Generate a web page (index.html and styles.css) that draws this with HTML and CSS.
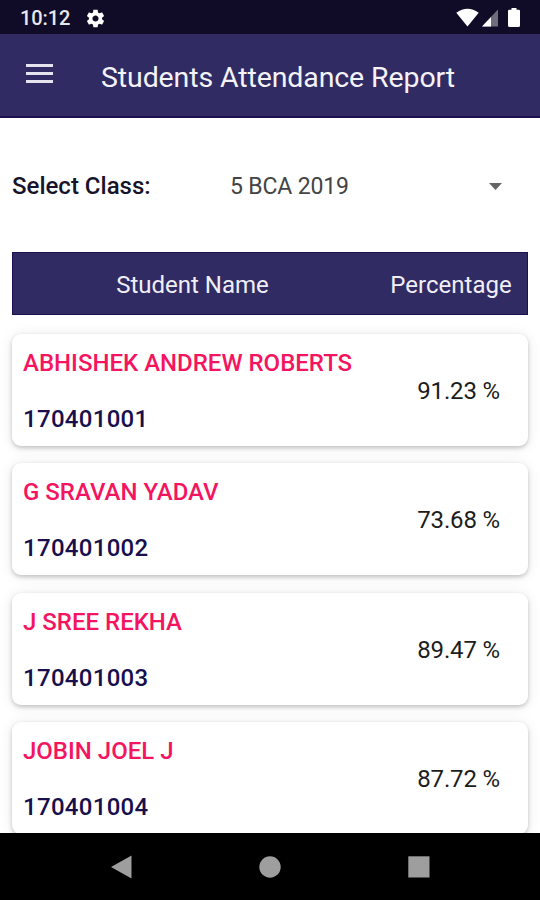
FILE: index.html
```
<!DOCTYPE html>
<html lang="en">
<head>
<meta charset="utf-8">
<title>Students Attendance Report</title>
<link rel="stylesheet" href="styles.css">
</head>
<body>
<div class="status">
  <span class="time">10:12</span>
  <svg class="gear" viewBox="0 0 24 24"><path fill="#fff" d="M19.43 12.98c.04-.32.07-.64.07-.98s-.03-.66-.07-.98l2.11-1.65c.19-.15.24-.42.12-.64l-2-3.46c-.12-.22-.39-.3-.61-.22l-2.49 1c-.52-.4-1.08-.73-1.69-.98l-.38-2.65C14.46 2.18 14.25 2 14 2h-4c-.25 0-.46.18-.49.42l-.38 2.65c-.61.25-1.17.59-1.69.98l-2.49-1c-.23-.09-.49 0-.61.22l-2 3.46c-.13.22-.07.49.12.64l2.11 1.65c-.04.32-.07.65-.07.98s.03.66.07.98l-2.11 1.65c-.19.15-.24.42-.12.64l2 3.46c.12.22.39.3.61.22l2.49-1c.52.4 1.08.73 1.69.98l.38 2.65c.03.24.24.42.49.42h4c.25 0 .46-.18.49-.42l.38-2.65c.61-.25 1.17-.59 1.69-.98l2.49 1c.23.09.49 0 .61-.22l2-3.46c.12-.22.07-.49-.12-.64l-2.11-1.65zM12 15.5c-1.93 0-3.500-1.570-3.500-3.500s1.570-3.500 3.500-3.500 3.500 1.570 3.500 3.500-1.570 3.500-3.500 3.500z"/></svg>
  <svg class="signals" viewBox="0 0 66 20"><path fill="#fff" d="M.3 4.800Q11.500-3.200 22.700 4.800L11.500 18.500Z"/><path fill="#6f6d7c" d="M42 1.500V18.500H26Z"/><path fill="#fff" d="M35 9V18.500H26Z"/><path fill="#fff" d="M55.500 0h5v1.800h2.200q1.300 0 1.300 1.300v14.400q0 1.500-1.500 1.500h-9q-1.500 0-1.500-1.500V3.100q0-1.300 1.300-1.300h2.200z"/></svg>
</div>
<header class="appbar">
  <div class="menu"><i></i><i></i><i></i></div>
  <h1>Students Attendance Report</h1>
</header>
<main>
  <div class="picker">
    <span class="label">Select Class:</span>
    <span class="value">5 BCA 2019</span>
    <svg class="caret" viewBox="0 0 13 7"><path fill="#666" d="M0 0h13L6.500 7z"/></svg>
  </div>
  <div class="thead"><span class="col-name">Student Name</span><span class="col-pct">Percentage</span></div>
  <div class="list">
    <div class="card"><div class="who"><span class="name">ABHISHEK ANDREW ROBERTS</span><span class="roll">170401001</span></div><span class="pct">91.23 %</span></div>
    <div class="card"><div class="who"><span class="name">G SRAVAN YADAV</span><span class="roll">170401002</span></div><span class="pct">73.68 %</span></div>
    <div class="card"><div class="who"><span class="name">J SREE REKHA</span><span class="roll">170401003</span></div><span class="pct">89.47 %</span></div>
    <div class="card"><div class="who"><span class="name">JOBIN JOEL J</span><span class="roll">170401004</span></div><span class="pct">87.72 %</span></div>
  </div>
</main>
<nav class="navbar">
  <svg viewBox="0 0 24 24"><path fill="#9e9e9e" d="M22.500.5v23L2 12z"/></svg>
  <svg viewBox="0 0 24 24"><circle fill="#9e9e9e" cx="12" cy="12" r="10.700"/></svg>
  <svg viewBox="0 0 24 24"><path fill="#9e9e9e" d="M1.300 1.300h21.200v21.200H1.300z"/></svg>
</nav>
</body>
</html>
```
FILE: styles.css
```
* { box-sizing: border-box; }
body {
  margin: 0;
  height: 900px;
  display: flex;
  flex-direction: column;
  overflow: hidden;
  background: #fff;
  font-family: Roboto, sans-serif;
  white-space: nowrap;
}
.status {
  height: 34px;
  flex: none;
  display: flex;
  align-items: center;
  padding: 2px 18px 0 20px;
  background: #100c28;
  color: #e8e8ec;
}
.time { width: 65px; font-size: 20px; font-weight: 500; line-height: 24px; letter-spacing: -.1px; }
.gear { width: 21px; height: 21px; }
.signals { width: 66px; height: 20px; margin-left: auto; }
.appbar {
  height: 84px;
  flex: none;
  display: flex;
  align-items: center;
  padding: 0 26px;
  background: #312b63;
  border-bottom: 2px solid #1c1150;
}
.menu { width: 27px; margin: -4px 48px 0 0; display: grid; gap: 5px; }
.menu i { height: 3px; background: #e4e3ee; }
h1 { margin: 6px 0 0; color: #f4f3fa; font-size: 28.500px; font-weight: 400; line-height: 34px; letter-spacing: -.11px; }
main { flex: 1; min-height: 0; overflow: hidden; padding: 0 12px; }
.picker { height: 134px; display: flex; align-items: center; padding: 2px 26px 0 0; font-size: 24px; }
.label { width: 218px; font-weight: 500; color: #17142a; }
.value { color: #444; font-size: 23px; letter-spacing: -.15px; padding-top: 1px; }
.caret { width: 13px; height: 7px; margin-left: auto; }
.thead {
  height: 63px;
  display: flex;
  align-items: center;
  background: #312b63;
  border: 1px solid #1c1150;
  color: #f0eff7;
  font-size: 24px;
  padding-top: 2px;
}
.col-name { width: 359px; text-align: center; }
.col-pct { flex: 1; text-align: center; padding-left: 3px; }
.list { padding-top: 19px; display: grid; gap: 17.400px; }
.card {
  height: 112px;
  display: flex;
  align-items: center;
  justify-content: space-between;
  padding: 0 28px 0 11px;
  background: #fff;
  border-radius: 9px;
  box-shadow: 0 2px 4px rgba(0,0,0,.2), 0 1px 14px rgba(0,0,0,.09);
}
.who { display: grid; gap: 28px; font-size: 24px; line-height: 28px; font-weight: 500; padding-top: 2px; }
.name { color: #f5145f; }
.roll { color: #17104d; letter-spacing: .3px; }
.pct { color: #1c1c1c; font-size: 24px; letter-spacing: -.15px; padding-top: 2px; }
.navbar {
  height: 67px;
  flex: none;
  display: flex;
  align-items: center;
  justify-content: center;
  gap: 125px;
  padding-right: 1px;
  background: #000;
}
.navbar svg { width: 24px; height: 24px; }
```
